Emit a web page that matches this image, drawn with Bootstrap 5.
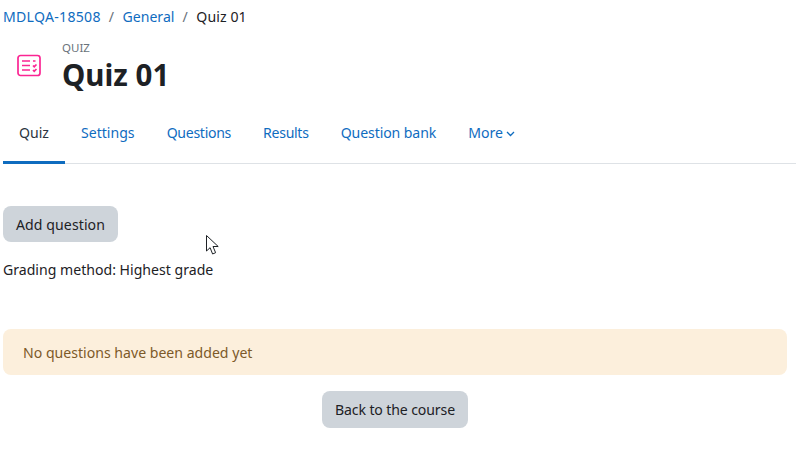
<!doctype html>
<html lang="en"><head><meta charset="utf-8"><title>Quiz 01</title>
<link href="https://cdn.jsdelivr.net/npm/bootstrap@5.3.0/dist/css/bootstrap.min.css" rel="stylesheet">
<style>
html,body{height:457px;overflow:hidden}
body{font-family:"Noto Sans","Open Sans",sans-serif;font-size:14.1px;line-height:1.5;color:#1d2125;background:#fff;position:relative}
a{text-decoration:none;color:#0f6cbf}
.page-wrap{padding:0 9px 0 3px}
.crumbs{margin:0;padding:6px 0 0;height:41px;font-size:14.1px}
.crumbs .breadcrumb-item+.breadcrumb-item{padding-left:8px}
.crumbs .breadcrumb-item+.breadcrumb-item::before{padding-right:8.500px;color:#6a737b}
.crumbs .breadcrumb-item.active{color:#1d2125;letter-spacing:.1px}
.wide-caps{letter-spacing:.27px}
.head-row{height:50px;gap:21px;padding-left:14px}
.kind{font-size:11.500px;line-height:14px;color:#6a737b;text-transform:uppercase}
.title{font-family:"Noto Sans",sans-serif;font-size:29.500px;font-weight:700;line-height:36px;margin:2px 0 -2px}
.tabs{margin-top:20px;height:53px;margin-right:-9px;border-bottom:1px solid #dee2e6;flex-wrap:nowrap}
.tabs .nav-link{padding:0 16px;height:53px;line-height:44px;color:#0f6cbf;border-bottom:3px solid transparent;font-size:14.1px}
.tabs .nav-link.active{color:#2b3440;border-bottom-color:#0f6cbf;padding:0 16px}
.tabs .nav-link.tight{letter-spacing:-.3px}
.tabs .nav-link.tight2{letter-spacing:-.3px}
.tabs .nav-link.tight3{letter-spacing:-.1px}
.chev{margin-left:3px;vertical-align:1px}
.gray-btn{background:#ced4da;color:#1d2125;border:0;border-radius:8px;font-size:14.1px;line-height:21px;height:36px}
.add-row .gray-btn{padding:8px 13px;letter-spacing:.08px}
.add-row{margin-top:42px}
.method{margin:17px 0 0;line-height:21px}
.note{margin:49px 0 0;padding:14px 20px;height:46px;background:#fcefdc;color:#7d5a29;border:0;border-radius:8px;line-height:20px}
.back-row{margin-top:16px;height:37px}
.back-row .gray-btn{height:37px;padding:8px 13px;letter-spacing:-.12px}
.pointer{position:absolute;left:206px;top:235px}
</style></head><body>
<div class="page-wrap">
<nav aria-label="breadcrumb"><ol class="breadcrumb crumbs">
<li class="breadcrumb-item"><a class="wide-caps" href="#">MDLQA-18508</a></li>
<li class="breadcrumb-item"><a href="#">General</a></li>
<li class="breadcrumb-item active" aria-current="page">Quiz 01</li>
</ol></nav>
<div class="d-flex align-items-center head-row">
<svg width="24" height="24" viewBox="0 0 24 24" fill="none" stroke="#fb2593" stroke-width="1.700"><rect x="1" y="1.500" width="22" height="20" rx="2.500"/><path d="M5 7h8M5 11.500h8M5 16h8M16 7h2.500M16 11.500l1.200 1.200L19.500 10.500M16 16l1.200 1.200L19.500 15"/></svg>
<div><div class="kind">Quiz</div><h1 class="title">Quiz 01</h1></div>
</div>
<ul class="nav tabs">
<li class="nav-item"><a class="nav-link active" href="#">Quiz</a></li>
<li class="nav-item"><a class="nav-link" href="#">Settings</a></li>
<li class="nav-item"><a class="nav-link tight" href="#">Questions</a></li>
<li class="nav-item"><a class="nav-link tight2" href="#">Results</a></li>
<li class="nav-item"><a class="nav-link tight3" href="#">Question bank</a></li>
<li class="nav-item"><a class="nav-link" href="#">More<svg class="chev" width="9" height="6" viewBox="0 0 9 6" fill="none" stroke="#0f6cbf" stroke-width="1.300"><path d="M1 1l3.500 3.500L8 1"/></svg></a></li>
</ul>
<div class="add-row"><button class="btn gray-btn" type="button">Add question</button></div>
<p class="method">Grading method: Highest grade</p>
<div class="alert note" role="alert">No questions have been added yet</div>
<div class="back-row text-center"><button class="btn gray-btn" type="button">Back to the course</button></div>
</div>
<svg class="pointer" width="14" height="21" viewBox="0 0 14 21"><path d="M.5.500V16l3.600-3.300L6.600 19l3-1.300-2.600-6.200h5.200z" fill="#fff" stroke="#1d2125" stroke-width="1"/></svg>
</body></html>
